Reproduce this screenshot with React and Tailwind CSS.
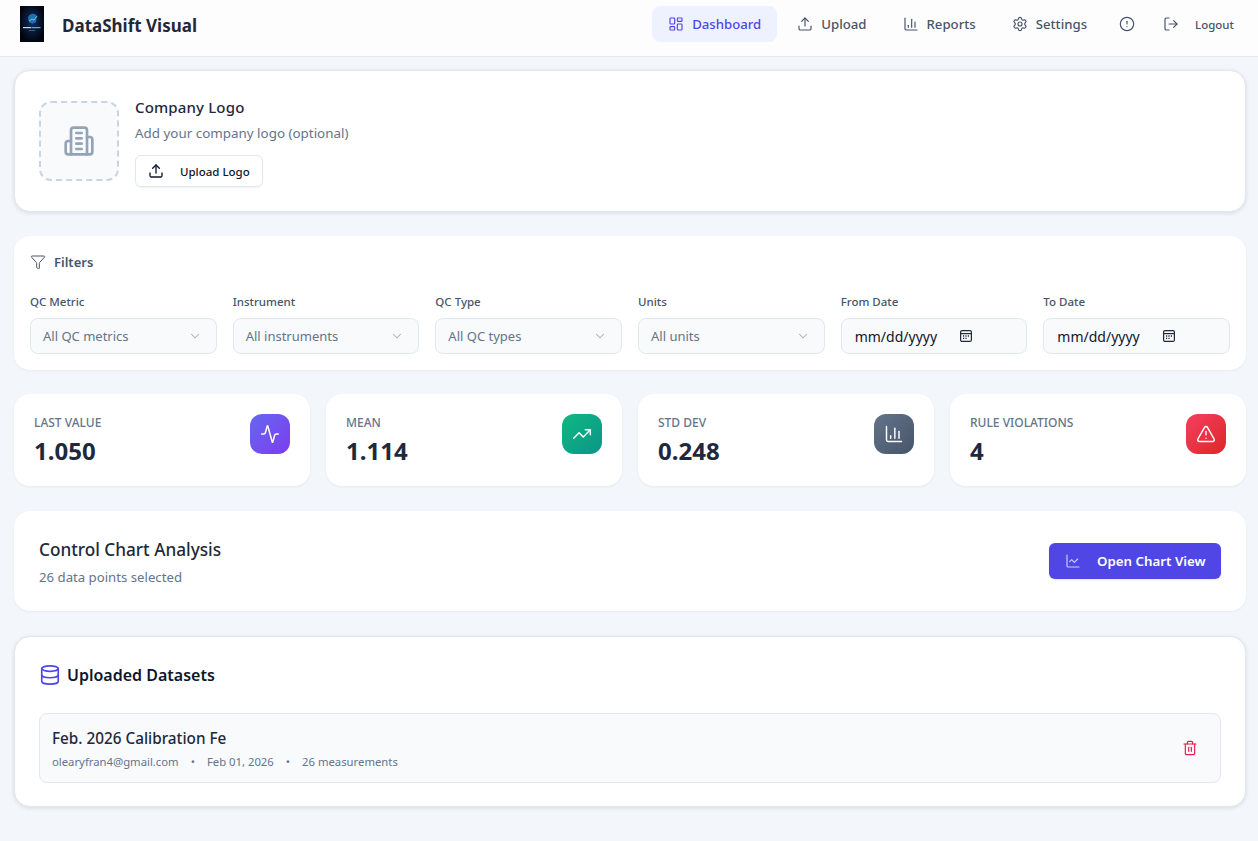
import {
  Activity,
  AlertCircle,
  AlertTriangle,
  BarChart3,
  ChartColumn,
  ChevronDown,
  Database,
  Filter,
  LayoutDashboard,
  LineChart,
  LogOut,
  Settings,
  Trash2,
  TrendingUp,
  Upload,
} from "lucide-react";

const font = { fontFamily: '"Noto Sans", "Open Sans", sans-serif' };

function Logo() {
  return (
    <svg width="24" height="36" viewBox="0 0 24 36" className="shrink-0">
      <defs>
        <radialGradient id="glow" cx="50%" cy="45%" r="55%">
          <stop offset="0%" stopColor="#10305f" />
          <stop offset="100%" stopColor="#02040f" />
        </radialGradient>
      </defs>
      <rect width="24" height="36" fill="url(#glow)" />
      <path d="M8 12 a5 5 0 0 1 9 -2 l-1 6 a5 5 0 0 1 -7 0 z" fill="#1d6fb8" />
      <path d="M9 15 l3 -2 2 1 3 -4" stroke="#6fd08c" strokeWidth="1" fill="none" />
      <rect x="3" y="21" width="8" height="1.2" fill="#cfd8e6" />
      <rect x="11.5" y="21" width="9" height="1.2" fill="#4fb6c9" />
      <rect x="9" y="24" width="6" height="0.7" fill="#64748b" />
    </svg>
  );
}

function BuildingIcon() {
  return (
    <svg width="32" height="32" viewBox="0 0 24 24" fill="none" stroke="currentColor" strokeWidth="2" strokeLinecap="round" strokeLinejoin="round">
      <path d="M6 22V4a2 2 0 0 1 2-2h8a2 2 0 0 1 2 2v18Z" />
      <path d="M6 12H4a2 2 0 0 0-2 2v6a2 2 0 0 0 2 2h2" />
      <path d="M18 9h2a2 2 0 0 1 2 2v9a2 2 0 0 1-2 2h-2" />
      <path d="M10 6h4M10 10h4M10 14h4M10 18h4" />
    </svg>
  );
}

function NavItem({ icon: Icon, label, active }) {
  return (
    <a
      className={
        active
          ? "flex h-9 items-center gap-2 rounded-lg bg-[#eef2ff] px-4 text-[13.2px] font-medium text-[#4f46e5]"
          : "flex h-9 items-center gap-2 rounded-lg px-4 text-[13.2px] font-medium text-[#475569]"
      }
    >
      <Icon size={16} strokeWidth={1.75} />
      <span className="pt-[2px]">{label}</span>
    </a>
  );
}

function FieldLabel({ children }) {
  return <label className="mb-2 block text-[11.5px] leading-4 font-medium text-[#475569]">{children}</label>;
}

function SelectField({ label, value }) {
  return (
    <div className="flex-1">
      <FieldLabel>{label}</FieldLabel>
      <div className="flex h-9 items-center justify-between rounded-lg border border-[#e2e8f0] bg-[#f8fafc] pr-[14px] pl-3 text-[13px] text-[#64748b]">
        <span className="pt-[2px]">{value}</span>
        <ChevronDown size={14} strokeWidth={1.75} className="text-[#a3afbf]" />
      </div>
    </div>
  );
}

function CalendarGlyph() {
  return (
    <svg width="14" height="14" viewBox="0 0 14 14" fill="none" stroke="#1f2937" strokeWidth="1.2">
      <rect x="1.6" y="1.6" width="10.8" height="10.8" rx="1.5" />
      <path d="M1.6 4.6h10.8" />
      <path d="M4 7h1.2M6.4 7h1.2M8.8 7H10M4 9.4h1.2M6.4 9.4h1.2" strokeWidth="1.3" />
    </svg>
  );
}

function DateField({ label }) {
  return (
    <div className="flex-1">
      <FieldLabel>{label}</FieldLabel>
      <div className="flex h-9 items-center gap-[22px] rounded-lg border border-[#e2e8f0] bg-[#f8fafc] pl-[13px] text-[14px] text-[#0f172a]">
        <span className="pt-[1px]">mm/dd/yyyy</span>
        <CalendarGlyph />
      </div>
    </div>
  );
}

function StatCard({ label, value, icon: Icon, tone }) {
  return (
    <div className="flex h-[92px] flex-1 items-start justify-between rounded-2xl bg-white p-5 shadow-[0_1px_3px_rgba(15,23,42,0.05)]">
      <div className="pt-[1px]">
        <div className="text-[12px] leading-4 font-medium text-[#64748b]">{label}</div>
        <div className="mt-1 text-[24px] leading-8 font-bold text-[#1e293b]">{value}</div>
      </div>
      <div className={`flex h-10 w-10 items-center justify-center rounded-xl text-white ${tone}`}>
        <Icon size={20} strokeWidth={1.75} />
      </div>
    </div>
  );
}

export default function App() {
  return (
    <div style={font} className="min-h-[841px] bg-[#f3f6fa] pb-[33px]">
      <header className="flex h-[57px] items-start justify-between border-b border-[#e2e8f0] bg-[#fdfdfe] pt-[6px] pr-6 pl-5">
        <div className="flex items-center gap-[18px]">
          <Logo />
          <span className="pt-[4px] text-[17px] font-bold text-[#1e293b]">DataShift Visual</span>
        </div>
        <nav className="flex h-9 items-center gap-1">
          <NavItem icon={LayoutDashboard} label="Dashboard" active />
          <NavItem icon={Upload} label="Upload" />
          <NavItem icon={ChartColumn} label="Reports" />
          <NavItem icon={Settings} label="Settings" />
          <span className="ml-3 text-[#475569]">
            <AlertCircle size={16} strokeWidth={1.75} />
          </span>
          <a className="ml-6 flex items-center gap-4 text-[11.5px] font-medium text-[#475569]">
            <LogOut size={16} strokeWidth={1.75} />
            <span className="pt-[2px]">Logout</span>
          </a>
        </nav>
      </header>

      <main className="pr-3 pl-[14px]">
        <section className="mt-[13px] flex h-[142px] items-center gap-4 rounded-2xl border border-[#e2e8f0] bg-white pl-6 shadow-[0_1px_4px_rgba(15,23,42,0.12)]">
          <div className="flex h-20 w-20 items-center justify-center rounded-xl border-2 border-dashed border-[#cbd5e1] bg-[#f8fafc] text-[#94a3b8]">
            <BuildingIcon />
          </div>
          <div>
            <h3 className="-mt-[1px] text-[15px] leading-6 font-medium tracking-[0.15px] text-[#1e293b]">Company Logo</h3>
            <p className="mt-1 text-[13.4px] leading-5 text-[#64748b]">Add your company logo (optional)</p>
            <button className="mt-3 flex h-8 items-center gap-[16px] rounded-md border border-[#e2e8f0] bg-white px-3 text-[11.5px] font-medium text-[#0f172a] shadow-[0_1px_2px_rgba(15,23,42,0.05)]">
              <Upload size={16} strokeWidth={2} />
              <span className="pt-[2px]">Upload Logo</span>
            </button>
          </div>
        </section>

        <section className="mt-6 h-[134px] rounded-2xl bg-white pt-[18px] pr-4 pl-4 shadow-[0_1px_3px_rgba(15,23,42,0.05)]">
          <div className="flex items-center gap-2 text-[#475569]">
            <Filter size={16} strokeWidth={1.5} />
            <span className="text-[13px] leading-4 font-semibold text-[#475569]">Filters</span>
          </div>
          <div className="mt-6 flex gap-4">
            <SelectField label="QC Metric" value="All QC metrics" />
            <SelectField label="Instrument" value="All instruments" />
            <SelectField label="QC Type" value="All QC types" />
            <SelectField label="Units" value="All units" />
            <DateField label="From Date" />
            <DateField label="To Date" />
          </div>
        </section>

        <section className="mt-6 flex gap-4">
          <StatCard label="LAST VALUE" value="1.050" icon={Activity} tone="bg-gradient-to-br from-[#6366f1] to-[#7c3aed]" />
          <StatCard label="MEAN" value="1.114" icon={TrendingUp} tone="bg-gradient-to-br from-[#10b981] to-[#0d9488]" />
          <StatCard label="STD DEV" value="0.248" icon={BarChart3} tone="bg-gradient-to-br from-[#64748b] to-[#475569]" />
          <StatCard label="RULE VIOLATIONS" value="4" icon={AlertTriangle} tone="bg-gradient-to-br from-[#f43f5e] to-[#dc2626]" />
        </section>

        <section className="mt-[25px] flex h-[100px] items-center justify-between rounded-2xl bg-white pr-[25px] pl-[25px] shadow-[0_1px_3px_rgba(15,23,42,0.05)]">
          <div className="pt-[2px]">
            <h2 className="text-[17.2px] leading-6 font-medium text-[#1e293b]">Control Chart Analysis</h2>
            <p className="mt-[5px] text-[13.2px] leading-5 text-[#64748b]">26 data points selected</p>
          </div>
          <button className="flex h-9 w-[172px] items-center gap-4 rounded-md bg-[#4f46e5] pl-4 text-[13.3px] font-semibold text-white shadow-[0_1px_2px_rgba(15,23,42,0.1)]">
            <LineChart size={16} strokeWidth={1.75} className="text-[#c7d2fe]" />
            <span className="pt-[2px]">Open Chart View</span>
          </button>
        </section>

        <section className="mt-[25px] h-[171px] rounded-2xl border border-[#e2e8f0] bg-white px-6 pt-6 shadow-[0_1px_4px_rgba(15,23,42,0.12)]">
          <div className="flex h-7 items-center gap-[6px]">
            <Database size={22} strokeWidth={1.8} className="text-[#4f46e5]" />
            <h2 className="text-[16px] font-semibold text-[#0f172a]">Uploaded Datasets</h2>
          </div>
          <div className="mt-6 flex h-[70px] items-center justify-between rounded-lg border border-[#e2e8f0] bg-[#f8fafc] pr-[22px] pl-3">
            <div className="pt-[1px]">
              <div className="text-[15.3px] leading-5 font-medium text-[#1e293b]">Feb. 2026 Calibration Fe</div>
              <div className="mt-[6px] flex items-center gap-3 text-[11.3px] leading-4 text-[#64748b]">
                <span>olearyfran4@gmail.com</span>
                <span>•</span>
                <span>Feb 01, 2026</span>
                <span>•</span>
                <span>26 measurements</span>
              </div>
            </div>
            <Trash2 size={16} strokeWidth={1.75} className="text-[#e11d48]" />
          </div>
        </section>
      </main>
    </div>
  );
}
